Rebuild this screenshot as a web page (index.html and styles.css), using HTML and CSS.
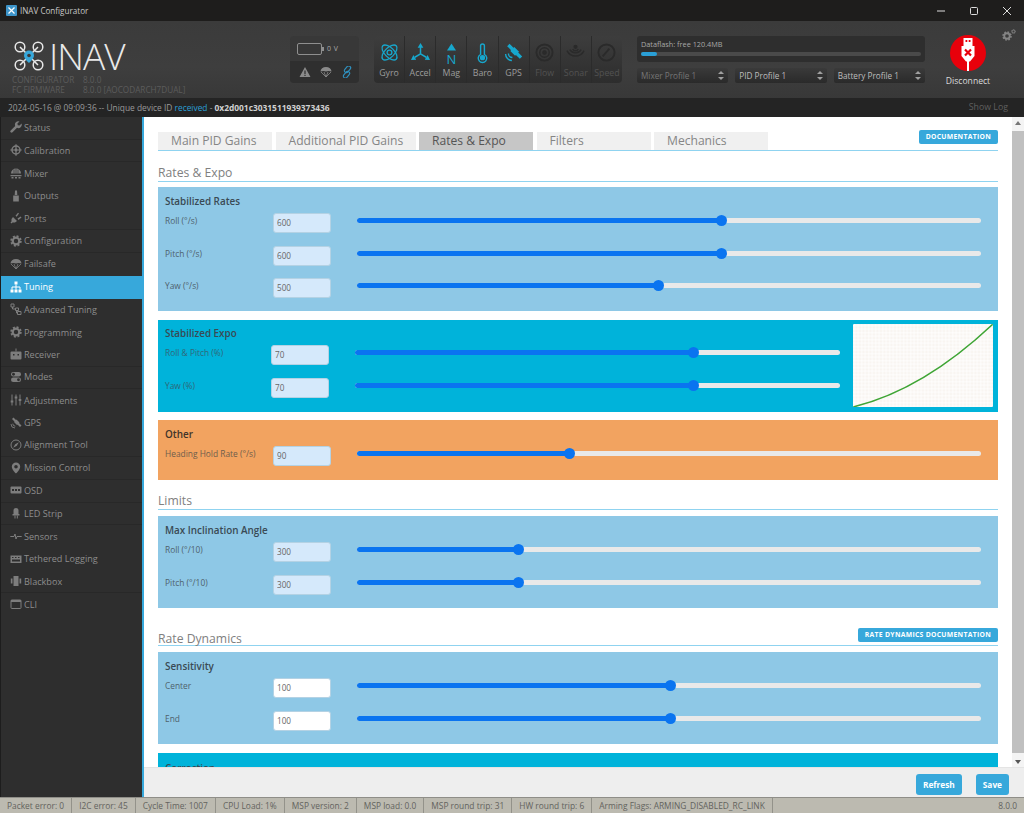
FILE: index.html
```html
<!DOCTYPE html>
<html lang="en">
<head>
<meta charset="utf-8">
<title>INAV Configurator</title>
<link rel="stylesheet" href="styles.css">
</head>
<body>
<svg class="defs" aria-hidden="true">
  <defs>
    <symbol id="i-wrench" viewBox="0 0 12 12"><path d="M11.600 2.600 9.500 4.600 7.800 4.200 7.400 2.500 9.500.5A3.400 3.400 0 0 0 5.200 5L.7 9.500a1.200 1.200 0 0 0 1.800 1.800L7 6.800a3.400 3.400 0 0 0 4.600-4.200z"/></symbol>
    <symbol id="i-cross" viewBox="0 0 12 12"><circle cx="6" cy="6" r="4" fill="none" stroke="currentColor" stroke-width="1.500"/><path d="M6 .3v11.400M.3 6h11.400" stroke="currentColor" stroke-width="1.200"/><circle cx="6" cy="6" r="1.400"/></symbol>
    <symbol id="i-fan" viewBox="0 0 12 12"><path d="M1 6.500a5 5 0 0 1 10 0z"/><path d="M.5 8h11v1.200H.5zM1.500 10h2v1.500h-2zM5 10h2v1.500H5zM8.500 10h2v1.500h-2z"/><path d="M4 2.500v4M6 1.500v5M8 2.500v4" stroke="#2e2e2e" stroke-width=".6"/></symbol>
    <symbol id="i-brush" viewBox="0 0 12 12"><path d="M5 .5h2l.3 4.500H4.700zM3.200 5.500h5.600v6H3.200z"/></symbol>
    <symbol id="i-plug" viewBox="0 0 12 12"><path d="M3 5 7 9 5 10.500H2.500L1.500 11.500.5 10.500l1-1V7zM5.500 3.800 8 .8l1 .8-2.300 3.200zM7.500 6.500l3.200-2 .8 1-3 2.500z"/></symbol>
    <symbol id="i-gear" viewBox="0 0 12 12"><circle cx="6" cy="6" r="3.300" fill="none" stroke="currentColor" stroke-width="2.200"/><circle cx="6" cy="6" r="4.800" fill="none" stroke="currentColor" stroke-width="1.800" stroke-dasharray="2 1.770"/></symbol>
    <symbol id="i-chute" viewBox="0 0 12 12"><path d="M.5 5.500a5.500 4.500 0 0 1 11 0L8.500 5 6 5.500 3.500 5z"/><path d="M1 6l5 5 5-5M4 6l2 5 2-5" fill="none" stroke="currentColor" stroke-width=".8"/></symbol>
    <symbol id="i-net" viewBox="0 0 12 12"><path d="M4.500.5h3v3h-3zM.5 8.500h3v3h-3zM4.500 8.500h3v3h-3zM8.500 8.500h3v3h-3z"/><path d="M6 3.500V8.500M2 8.500V6h8v2.500" fill="none" stroke="currentColor"/></symbol>
    <symbol id="i-tree" viewBox="0 0 12 12"><path d="M1 1h3v3H1zM5.500 5h3v2.500h-3zM7.500 8.500h3.500v3H7.500zM2.500 4v2h3M6.500 7.500v2.500h1" fill="none" stroke="currentColor"/></symbol>
    <symbol id="i-bot" viewBox="0 0 12 12"><path d="M5.500.5h1v3h-1z"/><path fill-rule="evenodd" d="M1.500 3.500h9a1 1 0 0 1 1 1v6a1 1 0 0 1-1 1h-9a1 1 0 0 1-1-1v-6a1 1 0 0 1 1-1zM3 6v1.500h1.500V6zM7.500 6v1.500H9V6z"/></symbol>
    <symbol id="i-toggle" viewBox="0 0 12 12"><rect x="1" y="1" width="10" height="4.500" rx="2.250"/><rect x="1" y="6.500" width="10" height="4.500" rx="2.250"/><circle cx="3.500" cy="3.250" r="1.400" fill="#2e2e2e"/><circle cx="8.500" cy="8.750" r="1.400" fill="#2e2e2e"/></symbol>
    <symbol id="i-sliders" viewBox="0 0 12 12"><path d="M2 .5v11M6 .5v11M10 .5v11" stroke="currentColor"/><path d="M.7 6.500h2.600v2H.7zM4.700 2.500h2.600v2H4.700zM8.700 5h2.600v2H8.700z"/></symbol>
    <symbol id="i-sat" viewBox="0 0 12 12"><path d="M3.500.5 6 3 4.500 4.500 2 2zM9 6l2.500 2.500L10 10 7.500 7.500zM6.500 2.500l3 3L7 8 4 5z"/><path d="M1 7a4 4 0 0 0 4 4M2.800 6.700a2.500 2.500 0 0 0 2.500 2.500" fill="none" stroke="currentColor" stroke-width=".9"/></symbol>
    <symbol id="i-compass" viewBox="0 0 12 12"><circle cx="6" cy="6" r="5" fill="none" stroke="currentColor"/><path d="M8.800 3.200 6.800 6.800 3.200 8.800l2-3.600z"/></symbol>
    <symbol id="i-pin" viewBox="0 0 12 12"><path fill-rule="evenodd" d="M6 .5a4.200 4.200 0 0 1 4.200 4.200C10.200 7.500 6 11.500 6 11.500S1.800 7.500 1.800 4.700A4.200 4.200 0 0 1 6 .5zM6 3a1.800 1.800 0 1 0 0 3.600A1.800 1.800 0 0 0 6 3z"/></symbol>
    <symbol id="i-osd" viewBox="0 0 12 12"><rect x=".5" y="2.500" width="11" height="7" rx="1"/><path d="M2 5h2v2H2zM5 5h2v2H5zM8 5h2v2H8z" fill="#2e2e2e"/></symbol>
    <symbol id="i-led" viewBox="0 0 12 12"><path d="M3.500 7V3.500a2.500 2.500 0 0 1 5 0V7h1v1.500h-7V7z"/><path d="M4.500 8.500h1v3h-1zM6.800 8.500h1v3h-1z"/></symbol>
    <symbol id="i-pulse" viewBox="0 0 12 12"><path d="M.3 6.500h3.700l1-2.500 1 5 1-2.500h4.700" fill="none" stroke="currentColor"/></symbol>
    <symbol id="i-tether" viewBox="0 0 12 12"><path fill-rule="evenodd" d="M.5 2.500h11v7.500H.5zM2 4v1h1.500V4zM5 4v1h1.500V4zM8 4v1h1.500V4zM2 6.500v2h8v-2z"/></symbol>
    <symbol id="i-box" viewBox="0 0 12 12"><rect x="3.500" y="1" width="5" height="10"/><path d="M.8 3.500h1.700v5H.8zM9.500 3.500h1.700v5H9.500z"/></symbol>
    <symbol id="i-cli" viewBox="0 0 12 12"><rect x="1" y="2" width="10" height="8.500" rx=".8" fill="none" stroke="currentColor"/><path d="M1 2h10v2H1z"/></symbol>
    <pattern id="grid" width="3.500" height="3.500" patternUnits="userSpaceOnUse"><path d="M0 0h3.500v3.500H0z" fill="#f9f5f1"/><path d="M1.700 0v3.500M0 1.700h3.500" stroke="#fff" stroke-width=".8"/></pattern>
  </defs>
</svg>

<div class="titlebar">
  <svg class="app-icon" viewBox="0 0 11 11"><rect width="11" height="11" rx="1" fill="#3c94c9"/><path d="M2.500 2.500l6 6M8.500 2.500l-6 6" stroke="#fff" stroke-width="1.300"/></svg>
  <span class="app-title">INAV Configurator</span>
  <div class="win-controls">
    <svg class="win-btn" viewBox="0 0 10 10"><path d="M1 5h8" stroke="#ddd"/></svg>
    <svg class="win-btn" viewBox="0 0 10 10"><rect x="1.500" y="1.500" width="7" height="7" rx="1" fill="none" stroke="#ddd"/></svg>
    <svg class="win-btn" viewBox="0 0 10 10"><path d="M1 1l8 8M9 1l-8 8" stroke="#ddd"/></svg>
  </div>
</div>

<header class="header">
  <div class="brand">
    <div class="logo">
      <svg class="logo-mark" viewBox="0 0 30 30">
        <g fill="none" stroke="#e8e8e8" stroke-width="1.500">
          <circle cx="6" cy="6" r="4.800"/><circle cx="24" cy="6" r="4.800"/><circle cx="6" cy="24" r="4.800"/><circle cx="24" cy="24" r="4.800"/>
          <path d="M6 6l6.500 6.500M24 6l-6.500 6.500M6 24l6.500-6.500M24 24l-6.500-6.500"/>
        </g>
        <path d="M15 9.500a5 5 0 0 1 5 5c0 3-5 7.500-5 7.500s-5-4.500-5-7.500a5 5 0 0 1 5-5z" fill="#37a8db"/>
        <circle cx="15" cy="14.500" r="1.800" fill="#3a3a3a"/>
      </svg>
      <span class="logo-text">INAV</span>
    </div>
    <div class="version-row"><span class="version-key">CONFIGURATOR</span><span>8.0.0</span></div>
    <div class="version-row"><span class="version-key">FC FIRMWARE</span><span>8.0.0 [AOCODARCH7DUAL]</span></div>
  </div>

  <div class="battery-box">
    <div class="battery-top">
      <span class="battery-icon"></span><span class="battery-volt">0 V</span>
    </div>
    <div class="battery-bottom">
      <svg class="stat-icon dim" viewBox="0 0 12 12"><path fill-rule="evenodd" d="M6 1l5.500 10H.5zM5.400 4.500v3.500h1.200V4.500zM5.400 8.800V10h1.200V8.800z"/></svg>
      <svg class="stat-icon dim"><use href="#i-chute"/></svg>
      <svg class="stat-icon link" viewBox="0 0 12 12" fill="none" stroke="currentColor" stroke-width="1.200"><rect x="4.500" y="-.5" width="4" height="7.500" rx="2" transform="rotate(40 6.500 3.250)"/><rect x="3.500" y="5" width="4" height="7.500" rx="2" transform="rotate(40 5.500 8.750)"/></svg>
    </div>
  </div>

  <div class="sensors">
    <div class="sensor on">
      <svg class="sensor-icon" viewBox="0 0 20 20" fill="none" stroke="currentColor" stroke-width="1.400"><ellipse cx="10" cy="10" rx="10" ry="5" transform="rotate(45 10 10)"/><ellipse cx="10" cy="10" rx="10" ry="5" transform="rotate(-45 10 10)"/><circle cx="10" cy="10" r="2.500"/></svg>
      <span>Gyro</span>
    </div>
    <div class="sensor on">
      <svg class="sensor-icon" viewBox="0 0 20 20"><path d="M10 11.500V4M10 11.500 4 15M10 11.500 16 15" fill="none" stroke="currentColor" stroke-width="1.600"/><path d="M10 0l3 5H7zM0 18l2.500-5.500 3 5zM20 18l-2.500-5.500-3 5z" fill="currentColor"/></svg>
      <span>Accel</span>
    </div>
    <div class="sensor on">
      <div class="mag-icon"><svg class="mag-tri" viewBox="0 0 10 8"><path d="M5 0l5 8H0z" fill="currentColor"/></svg><span class="mag-n">N</span></div>
      <span>Mag</span>
    </div>
    <div class="sensor on">
      <svg class="sensor-icon" viewBox="0 0 20 20" fill="none" stroke="currentColor" stroke-width="1.500"><path d="M8 12V3a2 2 0 0 1 4 0v9a4.500 4.500 0 1 1-4 0z"/><circle cx="10" cy="15.500" r="2" fill="currentColor"/></svg>
      <span>Baro</span>
    </div>
    <div class="sensor on">
      <svg class="sensor-icon sat"><use href="#i-sat"/></svg>
      <span>GPS</span>
    </div>
    <div class="sensor off">
      <svg class="sensor-icon" viewBox="0 0 20 20" fill="none" stroke="currentColor"><circle cx="10" cy="10" r="8.500" stroke-width="2"/><circle cx="10" cy="10" r="5" stroke-width="1.500"/><circle cx="10" cy="10" r="2" fill="currentColor"/></svg>
      <span>Flow</span>
    </div>
    <div class="sensor off">
      <svg class="sensor-icon" viewBox="0 0 20 20" fill="none" stroke="currentColor" stroke-width="1.500"><path d="M1 8a10 10 0 0 0 18 0M4 7a7 7 0 0 0 12 0M7 6.500a3.500 3.500 0 0 0 6 0"/><circle cx="10" cy="4" r="1.500" fill="currentColor"/></svg>
      <span>Sonar</span>
    </div>
    <div class="sensor off">
      <svg class="sensor-icon" viewBox="0 0 20 20" fill="none" stroke="currentColor"><circle cx="10" cy="10" r="8.500" stroke-width="2"/><path d="M6 14l7-8" stroke-width="2"/></svg>
      <span>Speed</span>
    </div>
  </div>

  <div class="flash-col">
    <div class="dataflash">
      <div class="dataflash-label">Dataflash: free 120.4MB</div>
      <div class="dataflash-bar"><div class="dataflash-fill"></div></div>
    </div>
    <div class="profiles">
      <div class="profile muted">Mixer Profile 1<span class="updown"></span></div>
      <div class="profile">PID Profile 1<span class="updown"></span></div>
      <div class="profile">Battery Profile 1<span class="updown"></span></div>
    </div>
  </div>

  <div class="connect">
    <svg class="usb" viewBox="0 0 36 36">
      <circle cx="18" cy="18" r="18" fill="#e8000b"/>
      <path d="M13.500 3h9v8h-9z" fill="#fff"/><path d="M15.500 5h1.800v2h-1.800zM18.700 5h1.800v2h-1.800z" fill="#e8000b"/>
      <path d="M11.500 11h13v10L20 26.500h-1V36h-2v-9.500h-1L11.500 21z" fill="#fff"/>
      <path d="M15 14.500l6 6M21 14.500l-6 6" stroke="#e8000b" stroke-width="2.200"/>
    </svg>
    <span class="connect-label">Disconnect</span>
  </div>

  <div class="settings">
    <svg class="gear-big"><use href="#i-gear"/></svg>
    <svg class="gear-small"><use href="#i-gear"/></svg>
  </div>
</header>

<div class="logbar">
  <div>2024-05-16 @ 09:09:36 -- Unique device ID <span class="log-blue">received</span> - <b>0x2d001c3031511939373436</b></div>
  <div class="showlog">Show Log</div>
</div>

<main class="main">
  <nav class="sidebar">
    <a class="nav sep"><svg class="nav-icon"><use href="#i-wrench"/></svg>Status</a>
    <a class="nav sep"><svg class="nav-icon"><use href="#i-cross"/></svg>Calibration</a>
    <a class="nav"><svg class="nav-icon"><use href="#i-fan"/></svg>Mixer</a>
    <a class="nav"><svg class="nav-icon"><use href="#i-brush"/></svg>Outputs</a>
    <a class="nav sep"><svg class="nav-icon"><use href="#i-plug"/></svg>Ports</a>
    <a class="nav sep"><svg class="nav-icon"><use href="#i-gear"/></svg>Configuration</a>
    <a class="nav"><svg class="nav-icon"><use href="#i-chute"/></svg>Failsafe</a>
    <a class="nav active"><svg class="nav-icon"><use href="#i-net"/></svg>Tuning</a>
    <a class="nav"><svg class="nav-icon"><use href="#i-tree"/></svg>Advanced Tuning</a>
    <a class="nav"><svg class="nav-icon"><use href="#i-gear"/></svg>Programming</a>
    <a class="nav sep"><svg class="nav-icon"><use href="#i-bot"/></svg>Receiver</a>
    <a class="nav sep"><svg class="nav-icon"><use href="#i-toggle"/></svg>Modes</a>
    <a class="nav"><svg class="nav-icon"><use href="#i-sliders"/></svg>Adjustments</a>
    <a class="nav"><svg class="nav-icon"><use href="#i-sat"/></svg>GPS</a>
    <a class="nav sep"><svg class="nav-icon"><use href="#i-compass"/></svg>Alignment Tool</a>
    <a class="nav sep"><svg class="nav-icon"><use href="#i-pin"/></svg>Mission Control</a>
    <a class="nav sep"><svg class="nav-icon"><use href="#i-osd"/></svg>OSD</a>
    <a class="nav sep"><svg class="nav-icon"><use href="#i-led"/></svg>LED Strip</a>
    <a class="nav"><svg class="nav-icon"><use href="#i-pulse"/></svg>Sensors</a>
    <a class="nav"><svg class="nav-icon"><use href="#i-tether"/></svg>Tethered Logging</a>
    <a class="nav sep"><svg class="nav-icon"><use href="#i-box"/></svg>Blackbox</a>
    <a class="nav"><svg class="nav-icon"><use href="#i-cli"/></svg>CLI</a>
  </nav>

  <section class="content">
    <div class="view">
      <div class="scroller">
        <div class="tabs">
          <a class="tab">Main PID Gains</a>
          <a class="tab tab-wide">Additional PID Gains</a>
          <a class="tab current">Rates &amp; Expo</a>
          <a class="tab">Filters</a>
          <a class="tab">Mechanics</a>
          <a class="doc-btn tabs-doc">DOCUMENTATION</a>
        </div>

        <h2 class="section first">Rates &amp; Expo</h2>
        <div class="panel blue">
          <h3>Stabilized Rates</h3>
          <div class="rows">
            <div class="row"><label>Roll (°/s)</label><input value="600"><div class="track"><div class="fill" style="width:58.3%"></div></div></div>
            <div class="row"><label>Pitch (°/s)</label><input value="600"><div class="track"><div class="fill" style="width:58.3%"></div></div></div>
            <div class="row"><label>Yaw (°/s)</label><input value="500"><div class="track"><div class="fill" style="width:48.2%"></div></div></div>
          </div>
        </div>

        <div class="panel cyan expo">
          <div class="expo-left">
            <h3>Stabilized Expo</h3>
            <div class="rows">
              <div class="row"><label>Roll &amp; Pitch (%)</label><input value="70"><div class="track"><div class="fill" style="width:69.7%"></div></div></div>
              <div class="row"><label>Yaw (%)</label><input value="70"><div class="track"><div class="fill" style="width:69.7%"></div></div></div>
            </div>
          </div>
          <svg class="curve" viewBox="0 0 140 83">
            <rect width="140" height="83" fill="url(#grid)"/>
            <path d="M0 83Q70 66 140 0" fill="none" stroke="#3fa535" stroke-width="1.500"/>
          </svg>
        </div>

        <div class="panel orange">
          <h3>Other</h3>
          <div class="rows">
            <div class="row"><label>Heading Hold Rate (°/s)</label><input value="90"><div class="track"><div class="fill" style="width:33.9%"></div></div></div>
          </div>
        </div>

        <h2 class="section limits">Limits</h2>
        <div class="panel blue">
          <h3>Max Inclination Angle</h3>
          <div class="rows">
            <div class="row"><label>Roll (°/10)</label><input value="300"><div class="track"><div class="fill" style="width:25.8%"></div></div></div>
            <div class="row"><label>Pitch (°/10)</label><input value="300"><div class="track"><div class="fill" style="width:25.8%"></div></div></div>
          </div>
        </div>

        <h2 class="section dynamics">Rate Dynamics<a class="doc-btn">RATE DYNAMICS DOCUMENTATION</a></h2>
        <div class="panel blue">
          <h3>Sensitivity</h3>
          <div class="rows">
            <div class="row"><label>Center</label><input class="plain" value="100"><div class="track"><div class="fill" style="width:50.2%"></div></div></div>
            <div class="row"><label>End</label><input class="plain" value="100"><div class="track"><div class="fill" style="width:50.2%"></div></div></div>
          </div>
        </div>

        <div class="panel cyan last">
          <h3>Correction</h3>
        </div>
      </div>

      <div class="scrollbar">
        <span class="arrow up"></span>
        <div class="thumb"></div>
        <span class="arrow down"></span>
      </div>
    </div>

    <div class="toolbar">
      <a class="btn">Refresh</a>
      <a class="btn">Save</a>
    </div>
  </section>
</main>

<footer class="status">
  <span class="cell">Packet error: 0</span>
  <span class="cell">I2C error: 45</span>
  <span class="cell">Cycle Time: 1007</span>
  <span class="cell">CPU Load: 1%</span>
  <span class="cell">MSP version: 2</span>
  <span class="cell">MSP load: 0.0</span>
  <span class="cell">MSP round trip: 31</span>
  <span class="cell">HW round trip: 6</span>
  <span class="cell">Arming Flags: ARMING_DISABLED_RC_LINK</span>
  <span class="status-version">8.0.0</span>
</footer>
</body>
</html>
```

FILE: styles.css
```css
* { box-sizing: border-box; }
html, body { margin: 0; height: 813px; overflow: hidden; }
body {
  width: 1024px;
  display: flex;
  flex-direction: column;
  font-family: "Open Sans", "Liberation Sans", sans-serif;
  background: #2e2e2e;
  color: #888;
}
.defs { width: 0; height: 0; display: block; overflow: hidden; }

/* title bar */
.titlebar {
  flex: 0 0 21px;
  display: flex;
  align-items: center;
  padding-left: 6px;
  background: #1e1d1c;
  color: #c8c8c8;
  font-size: 8.100px;
}
.app-icon { width: 11px; height: 11px; margin-right: 3px; }
.win-controls { margin-left: auto; display: flex; gap: 23px; padding-right: 12px; }
.win-btn { width: 10px; height: 10px; }

/* header */
.header {
  position: relative;
  flex: 0 0 77px;
  display: flex;
  padding-top: 15px;
  background: linear-gradient(#3b3b3b, #3e3e3e 60%, #383838);
}
.brand { width: 290px; padding-left: 12px; font-size: 8.200px; color: #5c5c5c; }
.logo { display: flex; align-items: center; height: 32px; margin: 4px 0 3px; padding-left: 2px; }
.logo-mark { width: 30px; height: 30px; }
.logo-text { font-size: 37px; font-weight: 300; color: #e9e9e9; line-height: 32px; margin-left: 5px; letter-spacing: -1px; }
.version-row { display: flex; height: 10.400px; line-height: 10.400px; }
.version-key { width: 71px; }

.battery-box { width: 69px; height: 47px; border-radius: 4px; overflow: hidden; background: #383838; margin-right: 15px; }
.battery-top { height: 25px; display: flex; align-items: center; padding-left: 7px; }
.battery-icon { position: relative; width: 25px; height: 12px; border: 1px solid #8f8f8f; border-radius: 2px; margin-right: 5px; }
.battery-icon::after { content: ""; position: absolute; right: -3px; top: 3px; width: 2px; height: 4px; background: #8f8f8f; }
.battery-volt { font-size: 7px; color: #aaa; letter-spacing: .5px; }
.battery-bottom { height: 22px; background: #2f2f2f; display: flex; align-items: center; padding-left: 9px; gap: 9px; }
.stat-icon { width: 12px; height: 12px; }
.stat-icon.dim { fill: #8a8a8a; color: #8a8a8a; }
.stat-icon.link { color: #2f8fbd; }

.sensors {
  width: 248px; height: 47px; display: flex; border-radius: 4px; overflow: hidden;
  background: linear-gradient(#3d3d3d, #2d2d2d); margin-right: 15px;
}
.sensor {
  flex: 1; display: flex; flex-direction: column; align-items: center;
  padding-top: 7px; font-size: 8.800px; line-height: 12px;
  border-right: 1px solid #2b2b2b;
}
.sensor:last-child { border-right: 0; }
.sensor.on { color: #17a7cd; }
.sensor.on > span { color: #9c9c9c; }
.sensor.off { color: #2a2a2a; }
.sensor.off > span { color: #525252; }
.sensor-icon { width: 19px; height: 19px; margin-bottom: 5px; overflow: visible; }
.sensor-icon.sat { fill: currentColor; }
.mag-icon { height: 24px; display: flex; flex-direction: column; align-items: center; }
.mag-tri { width: 9px; height: 8px; }
.mag-n { font-size: 13px; line-height: 14px; margin-top: 1px; }

.flash-col { width: 288px; }
.dataflash { height: 26px; padding: 3px 4px; background: #2e2e2e; border-radius: 3px; }
.dataflash-label { font-size: 7.300px; line-height: 10px; color: #a8a8a8; }
.dataflash-bar { height: 4px; margin-top: 3px; border-radius: 2px; background: #4a4a4a; }
.dataflash-fill { width: 16px; height: 100%; border-radius: 2px; background: #2a9fd6; }
.profiles { display: flex; gap: 7px; margin-top: 6px; }
.profile {
  flex: 1; height: 15px; padding-left: 4px; position: relative;
  font-size: 8.200px; line-height: 15px; color: #bdbdbd; border-radius: 2px;
  background: linear-gradient(#3a3a3a, #2a2a2a);
}
.profile.muted { color: #767676; }
.updown { position: absolute; right: 4px; top: 3px; width: 6px; height: 9px; }
.updown::before, .updown::after { content: ""; position: absolute; left: 0; border: 3px solid transparent; }
.updown::before { top: 0; border-top: 0; border-bottom: 3.500px solid #a0a0a0; }
.updown::after { bottom: 0; border-bottom: 0; border-top: 3.500px solid #a0a0a0; }

.connect { width: 60px; margin-left: 13px; display: flex; flex-direction: column; align-items: center; }
.usb { width: 36px; height: 36px; margin-top: -1px; }
.connect-label { font-size: 8.600px; line-height: 12px; color: #dcdcdc; margin-top: 4px; }

.settings { position: absolute; right: 8px; top: 8px; width: 14px; height: 12px; color: #858585; }
.gear-big { position: absolute; left: 0; top: 2px; width: 10px; height: 10px; fill: currentColor; }
.gear-small { position: absolute; right: 0; top: 0; width: 5px; height: 5px; fill: currentColor; }

/* log bar */
.logbar {
  flex: 0 0 19px;
  display: flex;
  justify-content: space-between;
  padding: 0 16px 0 8px;
  background: #242424;
  font-size: 8.400px;
  line-height: 19px;
  color: #9a9a9a;
}
.logbar b { color: #d0d0d0; font-weight: 700; }
.log-blue { color: #2a9fd6; }
.showlog { color: #5f5f5f; font-size: 8.800px; }

/* main */
.main { flex: 1; min-height: 0; display: flex; }
.sidebar {
  flex: 0 0 142px;
  display: grid;
  grid-auto-rows: 22.700px;
  align-content: start;
  background: #2e2e2e;
  border-left: 1px solid #1d1d1d;
}
.nav {
  display: flex;
  align-items: center;
  padding: 0 0 1px 9px;
  font-size: 9.100px;
  color: #8d8d8d;
  fill: #7d7d7d;
}
.nav svg { color: #7d7d7d; }
.nav.sep { border-bottom: 1px solid #282828; }
.nav.active { background: #37a8db; color: #fff; fill: #fff; }
.nav.active svg { color: #fff; }
.nav-icon { width: 12px; height: 12px; margin-right: 2px; flex: none; }

.content {
  flex: 1;
  min-width: 0;
  display: flex;
  flex-direction: column;
  border-left: 2px solid #37a8db;
  background: #fff;
}
.view { flex: 1; min-height: 0; display: flex; }
.scroller { flex: 1; min-width: 0; overflow: hidden; padding: 15px 14px 0 14px; }

.tabs { display: flex; height: 19px; gap: 3.500px; border-bottom: 1px solid #8fd3f0; align-items: flex-start; }
.tab {
  width: 114px; height: 18px; padding-left: 13px;
  background: #f0f0f0; color: #858585;
  font-size: 12.100px; line-height: 18px;
}
.tab-wide { width: 140px; }
.tab.current { background: #c6c6c6; color: #555; }
.doc-btn {
  margin-left: auto; height: 14px; padding: 0 7px; border-radius: 2px;
  background: #37a8db; color: #fff;
  font-size: 6.800px; font-weight: 700; line-height: 14px; letter-spacing: .3px;
}
.tabs-doc { margin-top: -2px; }

.section {
  display: flex;
  align-items: flex-end;
  margin: 0 0 5px;
  border-bottom: 1px solid #8fd3f0;
  font-size: 12.200px;
  font-weight: 400;
  color: #808080;
  line-height: 17px;
}
.section.first { height: 31px; }
.section.limits { height: 30px; margin-bottom: 6px; }
.section.dynamics { height: 29.500px; margin-bottom: 6px; line-height: 13px; }
.section .doc-btn { align-self: flex-end; margin-bottom: 3px; }

.panel { padding: 7px 17px 13px 7px; margin-bottom: 9px; }
.panel.blue { background: #8ec8e6; }
.panel.cyan { background: #00b3da; }
.panel.orange { background: #f2a360; margin-bottom: 0; padding-bottom: 14px; }
.panel h3 { margin: 0 0 5px; font-size: 9.900px; font-weight: 600; line-height: 14px; color: #3a4a54; }
.panel.orange h3 { color: #40342a; }
.rows { display: flex; flex-direction: column; gap: 12.500px; }
.row { display: flex; align-items: flex-start; height: 20px; }
.row label { width: 108px; flex: none; font-size: 8.400px; line-height: 15px; color: #4e626d; }
.cyan .row label { color: #2f6878; }
.orange .row label { color: #6e5d4c; }
.row input {
  width: 58px; height: 20px; flex: none; margin: 0 26px 0 0; padding: 0 0 1px 3px;
  border: 1px solid #b4d2e4; border-radius: 3px;
  background: #d5e9fb; color: #666;
  font: 8.200px "Open Sans", "Liberation Sans", sans-serif;
}
.row input.plain { background: #fff; }
.track { flex: 1; height: 5px; margin-top: 5px; border-radius: 3px; background: #e9e9e9; }
.fill { position: relative; height: 100%; border-radius: 3px; background: #0a74f0; }
.fill::after {
  content: ""; position: absolute; right: -6px; top: -3px;
  width: 11px; height: 11px; border-radius: 50%; background: #0a74f0;
}

.expo { display: flex; padding: 4px 5px 5px 7px; margin-bottom: 8px; }
.expo-left { width: 675px; padding-top: 2px; }
.expo .row label { width: 106px; }
.curve { width: 140px; height: 83px; margin-left: 13px; flex: none; border-radius: 1px; }
.last { height: 60px; margin-bottom: 0; padding-top: 8px; }

/* scrollbar */
.scrollbar { flex: 0 0 12px; display: flex; flex-direction: column; align-items: center; background: #f4f4f4; }
.arrow { width: 0; height: 0; flex: none; }
.arrow.up { margin: 4px 0 6px; border: 3px solid transparent; border-bottom: 4px solid #777; border-top: 0; }
.arrow.down { margin: 7px 0 3px; border: 3px solid transparent; border-top: 4px solid #555; border-bottom: 0; }
.thumb { flex: 1; width: 100%; background: #c0c0c0; }

/* toolbar */
.toolbar {
  flex: 0 0 30px;
  display: flex;
  justify-content: flex-end;
  gap: 14px;
  padding: 6px 15px 0 0;
  background: #eeeeee;
  border-top: 1px solid #e4e4e4;
}
.btn {
  height: 21px; padding: 0 7px; border-radius: 3px;
  background: #37a8db; color: #fff;
  font-size: 8.300px; font-weight: 700; line-height: 21px;
}

/* status */
.status {
  flex: 0 0 16px;
  display: flex;
  background: #bcbab0;
  border-top: 1px solid #8f8e88;
  font-size: 8.400px;
  line-height: 15px;
  color: #63635e;
}
.cell { padding: 0 7px; border-right: 1px solid #93928a; white-space: nowrap; }
.status-version { margin-left: auto; padding-right: 7px; }
```
